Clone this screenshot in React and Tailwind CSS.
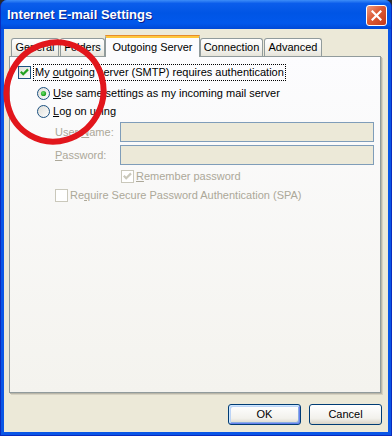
import React from "react";

function CheckBox({ checked, disabled }) {
  return (
    <span
      className={
        disabled
          ? "w-[13px] h-[13px] shrink-0 border border-[#CAC8BB] bg-white flex items-center justify-center"
          : "w-[13px] h-[13px] shrink-0 border border-[#1C5180] bg-[linear-gradient(135deg,#DCDCD7,#FFFFFF)] flex items-center justify-center"
      }
    >
      {checked && (
        <svg width="11" height="11" viewBox="0 0 11 11">
          <path
            d="M1.8 4.8 L4.2 7.2 L9 2.4"
            fill="none"
            stroke={disabled ? "#CAC8BB" : "#21A121"}
            strokeWidth="2.2"
          />
        </svg>
      )}
    </span>
  );
}

function Radio({ checked, id }) {
  return (
    <svg width="13" height="13" viewBox="0 0 13 13" className="shrink-0">
      <defs>
        <linearGradient id={id} x1="0" y1="0" x2="1" y2="1">
          <stop offset="0" stopColor="#DCDCD7" />
          <stop offset="1" stopColor="#FFFFFF" />
        </linearGradient>
        <radialGradient id={id + "d"} cx="0.4" cy="0.4" r="0.6">
          <stop offset="0" stopColor="#6BE46B" />
          <stop offset="1" stopColor="#1A9A1A" />
        </radialGradient>
      </defs>
      <circle cx="6.5" cy="6.5" r="6" fill={`url(#${id})`} stroke="#1C5180" strokeWidth="1" />
      {checked && <circle cx="6.5" cy="6.5" r="2.6" fill={`url(#${id}d)`} />}
    </svg>
  );
}

function Tab({ label, w }) {
  return (
    <div
      className="h-[18px] shrink-0 rounded-t-[3px] border border-b-0 border-[#919B9C] bg-[linear-gradient(to_bottom,#FFFFFF,#F3F3EF_60%,#E6E4DA)] flex items-center justify-center text-black"
      style={{ width: w }}
    >
      {label}
    </div>
  );
}

function Btn({ children, def }) {
  return (
    <div
      className={
        def
          ? "w-[73px] h-[21px] rounded-[3px] border border-[#003C74] bg-[linear-gradient(to_bottom,#FFFFFF,#F2F1EC_70%,#D8D3C6)] shadow-[inset_1px_1px_0_#CEE7FF,inset_-1px_-1px_0_#6982EE,inset_2px_2px_0_#BCD4F6,inset_-2px_-2px_0_#89ADE4] flex items-center justify-center text-black"
          : "w-[73px] h-[21px] rounded-[3px] border border-[#003C74] bg-[linear-gradient(to_bottom,#FFFFFF,#F2F1EC_70%,#D8D3C6)] flex items-center justify-center text-black"
      }
    >
      {children}
    </div>
  );
}

export default function App() {
  return (
    <div className="w-[392px] h-[436px] bg-[#2a2a2a] font-['Liberation_Sans',Arial,sans-serif] text-[11px] leading-none">
      <div className="relative w-[392px] h-[436px] rounded-t-[7px] overflow-hidden bg-[#0A56E6] border-l border-r border-b border-[#0A2BBE] flex flex-col">
        {/* Title bar */}
        <div className="h-[29px] shrink-0 flex items-start justify-between pl-[6px] pr-[4px] bg-[linear-gradient(to_bottom,#3D8DF8_0%,#0B5DEB_12%,#0055E5_45%,#0158EC_80%,#0048D6_100%)]">
          <div className="mt-[8px] text-white font-bold text-[13px] font-['Liberation_Sans',Arial,sans-serif] [text-shadow:1px_1px_0_#0A1C8A]">
            Internet E-mail Settings
          </div>
          <div className="mt-[5px] w-[21px] h-[21px] rounded-[3px] border border-white bg-[linear-gradient(135deg,#ED9A80,#DC5A34_45%,#C4391A)] flex items-center justify-center">
            <svg width="11" height="11" viewBox="0 0 11 11">
              <path d="M1.5 1.5 L9.5 9.5 M9.5 1.5 L1.5 9.5" stroke="white" strokeWidth="2.2" strokeLinecap="square" />
            </svg>
          </div>
        </div>

        {/* Client area */}
        <div className="mx-[3px] h-[403px] shrink-0 bg-[#ECE9D8] pt-[6px] px-[5px] flex flex-col">
          {/* Tabs */}
          <div className="h-[21px] flex items-end pl-[2px]">
            <Tab label="General" w={48} />
            <div className="w-[1px]" />
            <Tab label="Folders" w={45} />
            <div className="relative z-10 -mb-px h-[22px] w-[95px] shrink-0 rounded-t-[3px] border-x border-[#919B9C] bg-[#FCFCFE] flex flex-col">
              <div className="h-[1px] bg-[#E68B2C] rounded-t-[3px] -mx-px" />
              <div className="h-[2px] bg-[#FFC73C]" />
              <div className="flex-1 flex items-center justify-center text-black pb-[1px]">Outgoing Server</div>
            </div>
            <Tab label="Connection" w={63} />
            <div className="w-[1px]" />
            <Tab label="Advanced" w={58} />
          </div>

          {/* Panel */}
          <div className="w-[372px] h-[337px] shrink-0 border border-[#919B9C] bg-[linear-gradient(to_bottom,#FCFCFE,#F4F3EE)] shadow-[1px_1px_0_#B9B6A8,2px_2px_0_#D6D2C2] flex flex-col text-black">
            <div className="mt-[7px] h-[17px] flex items-center pl-[8px]">
              <CheckBox checked />
              <div className="ml-[2px] h-[17px] px-[1px] border border-dotted border-black flex items-center">
                My&nbsp;<span className="underline">o</span>utgoing server (SMTP) requires authentication
              </div>
            </div>
            <div className="mt-[3px] h-[18px] flex items-center pl-[27px]">
              <Radio checked id="r1" />
              <span className="ml-[3px]">
                <span className="underline">U</span>se same settings as my incoming mail server
              </span>
            </div>
            <div className="h-[18px] flex items-center pl-[27px]">
              <Radio id="r2" />
              <span className="ml-[3px]">
                <span className="underline">L</span>og on using
              </span>
            </div>
            <div className="mt-[2px] h-[20px] flex items-center pl-[45px] text-[#ACA899]">
              <div className="w-[65px]">
                User&nbsp;<span className="underline">N</span>ame:
              </div>
              <div className="w-[254px] h-[20px] border border-[#7F9DB9] bg-[#ECE9D8]" />
            </div>
            <div className="mt-[3px] h-[20px] flex items-center pl-[45px] text-[#ACA899]">
              <div className="w-[65px]">
                <span className="underline">P</span>assword:
              </div>
              <div className="w-[254px] h-[20px] border border-[#7F9DB9] bg-[#ECE9D8]" />
            </div>
            <div className="mt-[3px] h-[17px] flex items-center pl-[111px] text-[#ACA899]">
              <CheckBox checked disabled />
              <span className="ml-[2px]">
                <span className="underline">R</span>emember password
              </span>
            </div>
            <div className="mt-[2px] h-[17px] flex items-center pl-[45px] text-[#ACA899]">
              <CheckBox disabled />
              <span className="ml-[2px]">
                Re<span className="underline">q</span>uire Secure Password Authentication (SPA)
              </span>
            </div>
          </div>

          {/* Buttons */}
          <div className="mt-[11px] h-[21px] flex justify-end gap-[8px] pr-[1px]">
            <Btn def>OK</Btn>
            <Btn>Cancel</Btn>
          </div>
        </div>

        {/* Red annotation circle */}
        <svg className="absolute left-[-1px] top-0 pointer-events-none" width="392" height="436" viewBox="0 0 392 436">
          <ellipse cx="55" cy="92" rx="48" ry="50" transform="rotate(30 55 92)" fill="none" stroke="#E2161C" strokeWidth="6" />
        </svg>
      </div>
    </div>
  );
}
